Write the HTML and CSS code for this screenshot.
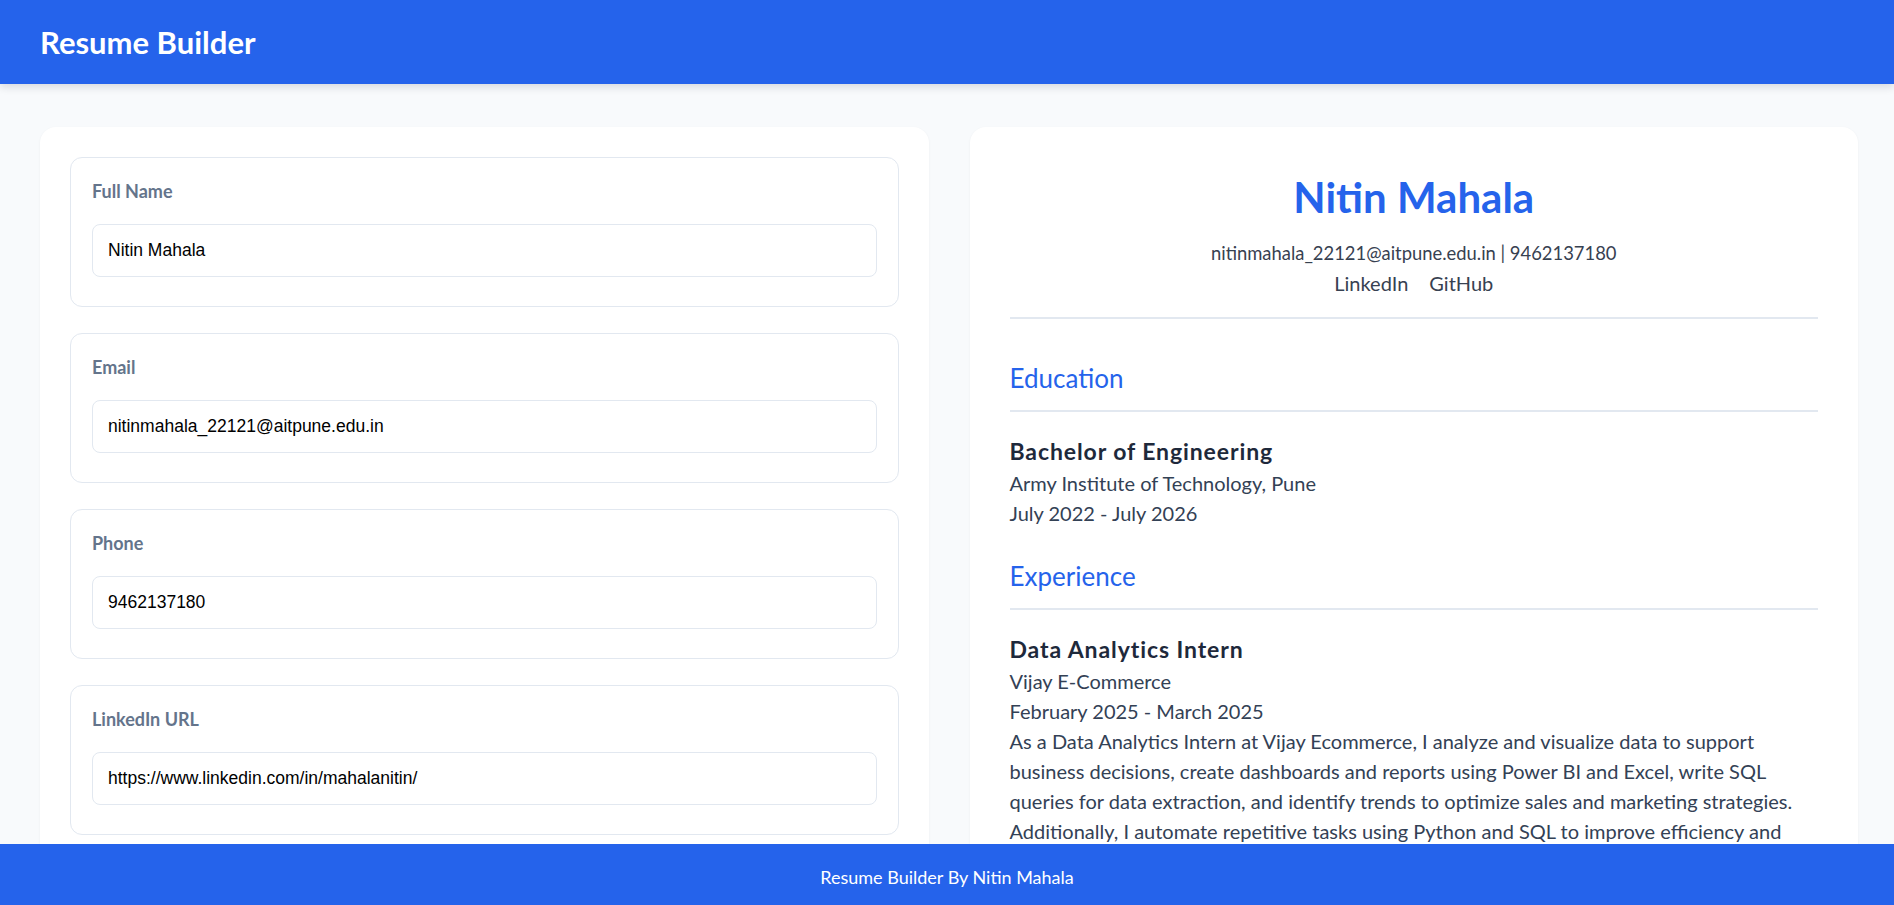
FILE: index.html
```html
<!DOCTYPE html>
<html lang="en">
<head>
<meta charset="utf-8">
<title>Resume Builder</title>
<link rel="stylesheet" href="styles.css">
</head>
<body>
<header class="topbar">
  <h1 class="brand">Resume Builder</h1>
</header>

<main class="layout">
  <section class="editor">
    <div class="field">
      <label class="field-label" for="fullName">Full Name</label>
      <input class="field-input" id="fullName" type="text" value="Nitin Mahala">
    </div>
    <div class="field">
      <label class="field-label" for="email">Email</label>
      <input class="field-input" id="email" type="text" value="nitinmahala_22121@aitpune.edu.in">
    </div>
    <div class="field">
      <label class="field-label" for="phone">Phone</label>
      <input class="field-input" id="phone" type="text" value="9462137180">
    </div>
    <div class="field">
      <label class="field-label" for="linkedin">LinkedIn URL</label>
      <input class="field-input" id="linkedin" type="text" value="https://www.linkedin.com/in/mahalanitin/">
    </div>
    <div class="field">
      <label class="field-label" for="github">GitHub URL</label>
      <input class="field-input" id="github" type="text" value="https://github.com/mahalanitin">
    </div>
    <div class="field">
      <label class="field-label" for="summary">Summary</label>
      <input class="field-input" id="summary" type="text" value="">
    </div>
  </section>

  <section class="preview">
    <h2 class="cv-name">Nitin Mahala</h2>
    <p class="cv-contact">nitinmahala_22121@aitpune.edu.in | 9462137180</p>
    <p class="cv-links"><a href="#">LinkedIn</a><a href="#">GitHub</a></p>
    <hr class="rule rule-top">

    <h3 class="cv-section">Education</h3>
    <hr class="rule">
    <div class="cv-entry">
      <h4 class="cv-entry-title">Bachelor of Engineering</h4>
      <p class="cv-line">Army Institute of Technology, Pune</p>
      <p class="cv-line">July 2022 - July 2026</p>
    </div>

    <h3 class="cv-section cv-section-next">Experience</h3>
    <hr class="rule">
    <div class="cv-entry">
      <h4 class="cv-entry-title">Data Analytics Intern</h4>
      <p class="cv-line">Vijay E-Commerce</p>
      <p class="cv-line">February 2025 - March 2025</p>
      <p class="cv-line">As a Data Analytics Intern at Vijay Ecommerce, I analyze and visualize data to support business decisions, create dashboards and reports using Power BI and Excel, write SQL queries for data extraction, and identify trends to optimize sales and marketing strategies. Additionally, I automate repetitive tasks using Python and SQL to improve efficiency and streamline reporting workflows.</p>
    </div>

    <h3 class="cv-section cv-section-next">Skills</h3>
    <hr class="rule">
    <p class="cv-line">Python, SQL, Power BI, Excel</p>
  </section>
</main>

<footer class="footer">Resume Builder By Nitin Mahala</footer>
</body>
</html>
```

FILE: styles.css
```css
* {
  box-sizing: border-box;
}

body {
  margin: 0;
  background: #f8fafc;
  font-family: Lato, "Noto Sans", "Open Sans", sans-serif;
  color: #1f2937;
}

.topbar {
  height: 84px;
  background: #2563eb;
  padding: 0 40px;
  display: flex;
  align-items: center;
  box-shadow: 0 3px 8px rgba(15, 23, 42, 0.14);
}

.brand {
  margin: 0;
  color: #ffffff;
  font-size: 31px;
  font-weight: 700;
  line-height: 1;
}

.layout {
  display: grid;
  grid-template-columns: 1fr 1fr;
  gap: 41px;
  padding: 43px 36px 100px 40px;
}

.editor {
  background: #ffffff;
  border-radius: 16px;
  padding: 30px;
  display: flex;
  flex-direction: column;
  gap: 26px;
  box-shadow: 0 1px 3px rgba(15, 23, 42, 0.05);
}

.field {
  border: 1px solid #e2e8f0;
  border-radius: 12px;
  padding: 20px 21px 29px 21px;
  display: flex;
  flex-direction: column;
}

.field-label {
  font-size: 18px;
  line-height: 27px;
  font-weight: 700;
  color: #64748b;
  margin-bottom: 19px;
}

.field-input {
  height: 53px;
  border: 1px solid #e2e8f0;
  border-radius: 8px;
  padding: 0 15px;
  font-family: "Liberation Sans", Arial, sans-serif;
  font-size: 17.5px;
  color: #000000;
  background: #ffffff;
  outline: none;
}

.preview {
  background: #ffffff;
  border-radius: 16px;
  padding: 40px;
  display: flex;
  flex-direction: column;
  box-shadow: 0 1px 3px rgba(15, 23, 42, 0.05);
}

.cv-name {
  margin: 0;
  text-align: center;
  color: #2563eb;
  font-size: 42px;
  line-height: 60px;
  font-weight: 700;
}

.cv-contact {
  margin: 11px 0 0;
  text-align: center;
  font-size: 18.4px;
  line-height: 30px;
  color: #374151;
}

.cv-links {
  margin: 0;
  text-align: center;
  font-size: 20px;
  line-height: 30px;
  display: flex;
  justify-content: center;
  gap: 21px;
}

.cv-links a {
  color: #374151;
  text-decoration: none;
}

.rule {
  width: 100%;
  height: 2px;
  border: 0;
  background: #e2e8f0;
  margin: 0;
}

.rule-top {
  margin-top: 19px;
}

.cv-section {
  margin: 41px 0 14px;
  font-size: 26px;
  line-height: 36px;
  font-weight: 400;
  color: #2563eb;
}

.cv-section-next {
  margin-top: 30px;
}

.cv-entry {
  margin-top: 24px;
  display: flex;
  flex-direction: column;
}

.cv-entry-title {
  margin: 0 0 2px;
  font-size: 23px;
  line-height: 30px;
  font-weight: 700;
  letter-spacing: 0.9px;
  color: #1e293b;
}

.cv-line {
  margin: 0;
  font-size: 20px;
  line-height: 30px;
  color: #334155;
}

.footer {
  position: fixed;
  left: 0;
  right: 0;
  bottom: 0;
  height: 61px;
  background: #2563eb;
  color: #ffffff;
  text-align: center;
  font-size: 18px;
  line-height: 27px;
  padding: 20px 0 14px;
}
```
